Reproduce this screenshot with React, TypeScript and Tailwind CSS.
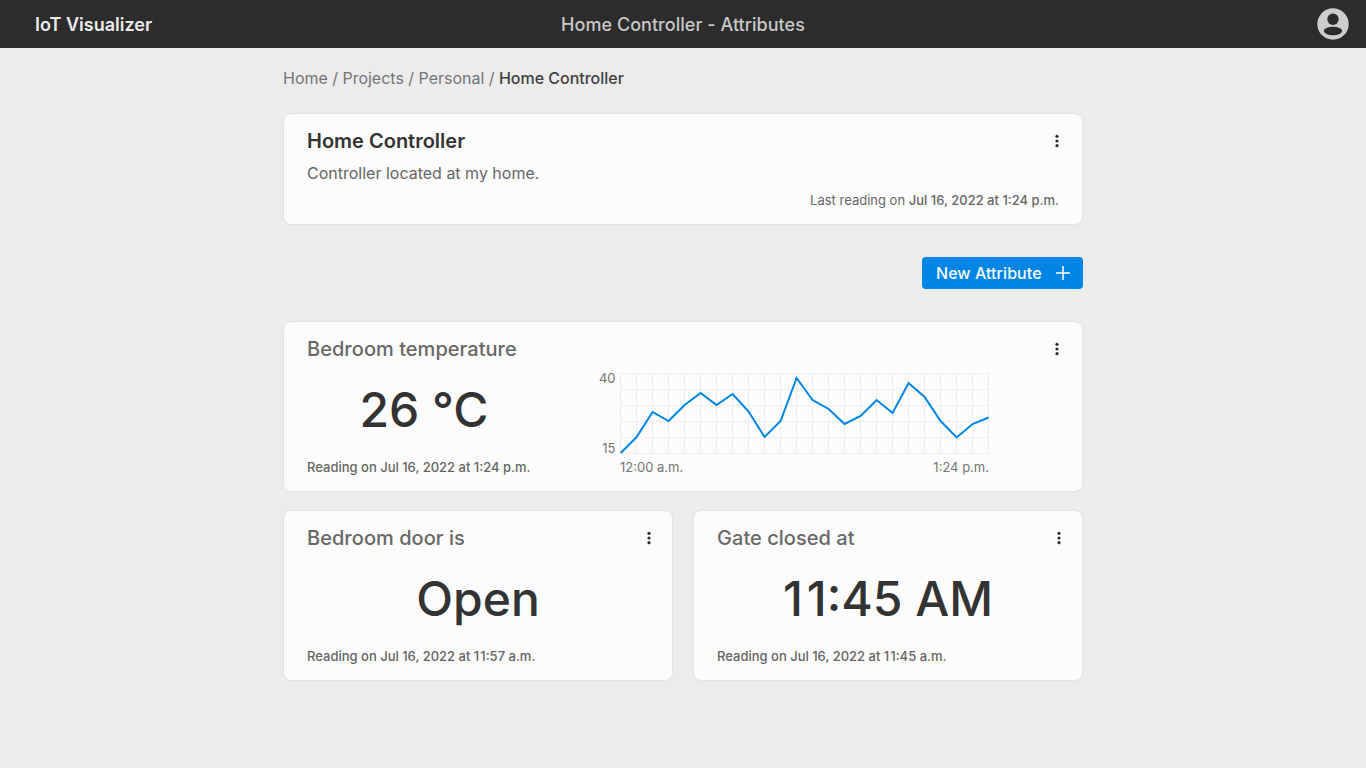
import React from "react";

const Dots = () => (
  <svg width="16" height="16" viewBox="0 0 16 16" className="block fill-[#2f2f2f]">
    <circle cx="8" cy="3.3" r="1.6" />
    <circle cx="8" cy="8" r="1.6" />
    <circle cx="8" cy="12.7" r="1.6" />
  </svg>
);

const card = "rounded-lg border border-[#e3e3e3] bg-[#fcfcfc]";

const points =
  "621,453 637,437 653,412 669,421 685,405 701,393 717,405 733,394 749,411.5 765,437 781,421 797,378 813,400 829,409 845,424 861,416 877,400 893,413 909,383 925,397 941,421 957,437.5 973,424 989,417.5";

function Chart() {
  return (
    <svg width="371" height="83" viewBox="620 372 371 83" className="block">
      <g stroke="#ededed" strokeWidth="1">
        {Array.from({ length: 24 }, (_, i) => (
          <line key={i} x1={620.5 + i * 16} x2={620.5 + i * 16} y1="373" y2="454" />
        ))}
        {Array.from({ length: 6 }, (_, i) => (
          <line key={i} x1="620" x2="989" y1={373.5 + i * 16} y2={373.5 + i * 16} />
        ))}
      </g>
      <polyline points={points} transform="translate(-0.4 0)" fill="none" stroke="#0085e4" strokeWidth="2" />
    </svg>
  );
}

// Opens up the tight kerning between the digits of "11".
function Spaced({ text }: { text: string }) {
  const at = text.indexOf("11:");
  if (at < 0) return <>{text}</>;
  return (
    <>
      {text.slice(0, at)}
      <span className="tracking-[0.08em]">1</span>
      {text.slice(at + 1)}
    </>
  );
}

function ValueCard({ title, value, time }: { title: string; value: string; time: string }) {
  return (
    <section className={`${card} h-[171px] w-[390px] pl-[23px] pr-[15px]`}>
      <div className="flex h-[54px] items-center justify-between">
        <h2 className="text-xl font-medium tracking-[0.04px] text-[#686868]">{title}</h2>
        <Dots />
      </div>
      <div className="pr-2 text-center text-5xl leading-[68px] font-medium text-[#333333]">
        <Spaced text={value} />
      </div>
      <p className="mt-[13px] text-[13px] leading-5 font-medium text-[#646464]">
        <Spaced text={time} />
      </p>
    </section>
  );
}

export default function App() {
  return (
    <div className="min-h-screen bg-[#ececec] font-['Inter',sans-serif] text-[#666666]">
      <header className="grid h-12 grid-cols-[1fr_auto_1fr] items-center bg-[#2c2c2c] px-4 text-lg">
        <span className="pt-0.5 pl-[19px] font-semibold text-[#ebebeb]">IoT Visualizer</span>
        <span className="pt-0.5 text-center font-medium tracking-[0.04px] text-[#c8c8c8]">Home Controller - Attributes</span>
        <svg width="34" height="34" viewBox="0 0 34 34" className="justify-self-end">
          <circle cx="17" cy="17" r="15.7" fill="#cdcdcd" />
          <circle cx="17" cy="12.3" r="5.7" fill="#2c2c2c" />
          <ellipse cx="17" cy="24" rx="9.2" ry="4.2" fill="#2c2c2c" />
        </svg>
      </header>
      <main className="mx-auto w-[800px]">
        <nav className="pt-[18px] text-base leading-6 tracking-[-0.015px] text-[#757575]">
          Home / Projects / Personal / <span className="font-medium text-[#404040]">Home Controller</span>
        </nav>
        <section className={`${card} mt-[23px] h-28 px-[23px]`}>
          <div className="-mr-[6px] flex h-[54px] items-center justify-between">
            <h1 className="text-xl font-semibold text-[#333333]">Home Controller</h1>
            <Dots />
          </div>
          <p className="-mt-[7px] text-base leading-6">Controller located at my home.</p>
          <p className="mt-[5px] text-right text-[13px] leading-5">
            Last reading on <span className="font-medium">Jul 16, 2022 at 1:24 p.m.</span>
          </p>
        </section>
        <div className="mt-8 flex justify-end">
          <button className="flex h-8 w-[161px] items-center justify-between rounded bg-[#0085e4] pr-3 pl-[14px] text-base font-medium tracking-[0.06px] text-[#f8fcff]">
            New Attribute
            <svg width="16" height="16" viewBox="0 0 16 16" stroke="white" strokeWidth="1.5">
              <path d="M8 1v14M1 8h14" />
            </svg>
          </button>
        </div>
        <section className={`${card} mt-8 h-[171px] px-[23px]`}>
          <div className="-mr-[6px] flex h-[54px] items-center justify-between">
            <h2 className="text-xl font-medium tracking-[0.04px] text-[#686868]">Bedroom temperature</h2>
            <Dots />
          </div>
          <div className="flex">
            <div className="w-[234px]">
              <div className="text-center text-5xl leading-[68px] font-medium text-[#333333]">26 °C</div>
              <p className="mt-[13px] text-[13px] leading-5 font-medium whitespace-nowrap">Reading on Jul 16, 2022 at 1:24 p.m.</p>
            </div>
            <div className="-mt-[4px] ml-[50px] flex">
              <div className="-mt-[4px] flex h-[90px] w-[24.5px] flex-col justify-between text-right text-[13px] leading-5 text-[#757575]">
                <span>40</span>
                <span>15</span>
              </div>
              <div className="ml-[4.5px] w-[371px]">
                <Chart />
                <div className="mt-[2px] flex w-[369px] justify-between text-[13px] leading-5 text-[#757575]">
                  <span>12:00 a.m.</span>
                  <span>1:24 p.m.</span>
                </div>
              </div>
            </div>
          </div>
        </section>
        <div className="mt-[18px] flex justify-between">
          <ValueCard title="Bedroom door is" value="Open" time="Reading on Jul 16, 2022 at 11:57 a.m." />
          <ValueCard title="Gate closed at" value="11:45 AM" time="Reading on Jul 16, 2022 at 11:45 a.m." />
        </div>
      </main>
    </div>
  );
}
